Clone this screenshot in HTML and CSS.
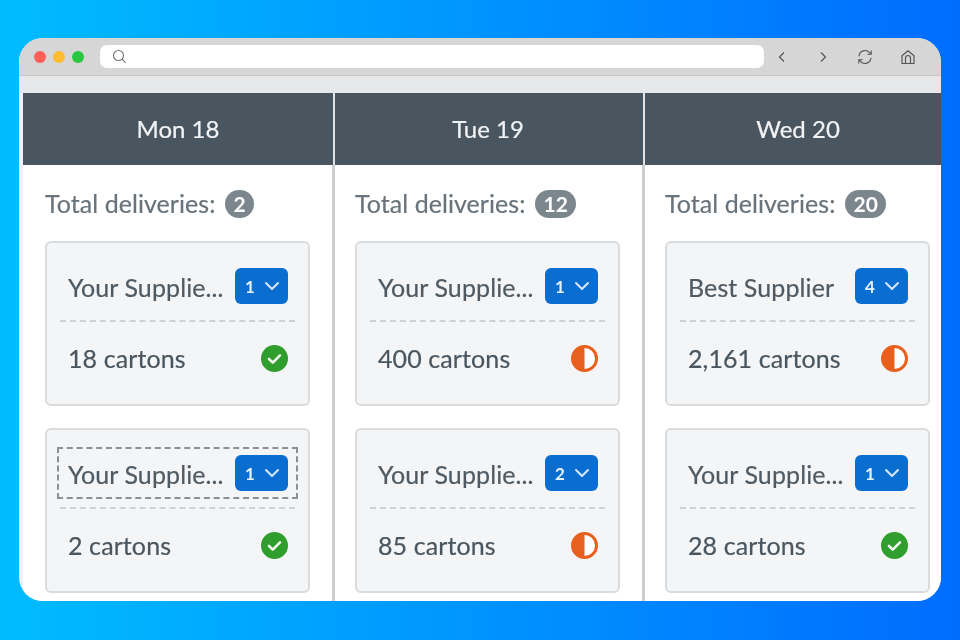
FILE: index.html
```html
<!DOCTYPE html>
<html lang="en">
<head>
<meta charset="utf-8">
<title>Deliveries</title>
<link rel="stylesheet" href="styles.css">
</head>
<body>
<svg class="defs" width="0" height="0" aria-hidden="true">
  <symbol id="done" viewBox="0 0 27 27"><circle cx="13.5" cy="13.5" r="13.5" fill="#2f9e2c"/><path d="M8 14l3.8 3.6L19 10.4" fill="none" stroke="#f2f7f0" stroke-width="2.6" stroke-linecap="round" stroke-linejoin="round"/></symbol>
  <symbol id="half" viewBox="0 0 27 27"><circle cx="13.5" cy="13.5" r="12" fill="#fff" stroke="#e8601e" stroke-width="3"/><path d="M13.5 2a11.5 11.5 0 0 0 0 23z" fill="#e8601e"/></symbol>
  <symbol id="chev" viewBox="0 0 16 10"><path d="M2 2l6 6 6-6" fill="none" stroke="#d5e6f8" stroke-width="2" stroke-linecap="round" stroke-linejoin="round"/></symbol>
</svg>
<main class="window">
  <header class="chrome">
    <div class="lights"><span class="light red"></span><span class="light yellow"></span><span class="light green"></span></div>
    <div class="address">
      <svg class="search" width="15" height="15" viewBox="0 0 15 15"><circle cx="6.5" cy="6.5" r="5" fill="none" stroke="#6f6f6f" stroke-width="1.1"/><path d="M10.2 10.2l3.4 3.4" stroke="#6f6f6f" stroke-width="1.1"/></svg>
    </div>
    <nav class="tools">
      <svg class="tool" width="14" height="14" viewBox="0 0 14 14"><path d="M9 2.5L4.5 7 9 11.5" fill="none" stroke="#555" stroke-width="1.2"/></svg>
      <svg class="tool" width="14" height="14" viewBox="0 0 14 14"><path d="M5 2.5L9.5 7 5 11.5" fill="none" stroke="#555" stroke-width="1.2"/></svg>
      <svg class="tool" width="16" height="16" viewBox="0 0 16 16"><path d="M2 7.2A6 6 0 0 1 12.5 3.6L14 5M14 8.8A6 6 0 0 1 3.5 12.4L2 11" fill="none" stroke="#555" stroke-width="1.1"/><path d="M14.2 1.4V5.2H10.4M1.8 14.6V10.8H5.6" fill="none" stroke="#555" stroke-width="1.1"/></svg>
      <svg class="tool" width="16" height="16" viewBox="0 0 16 16"><path d="M2 14.5V6.8L8 1.8l6 5v7.7zM5.5 14.5V9a2.5 2.5 0 0 1 5 0v5.5" fill="none" stroke="#555" stroke-width="1.2" stroke-linejoin="round"/></svg>
    </nav>
  </header>
  <div class="strip"></div>
  <section class="board">
    <article class="day">
      <h2 class="day-title">Mon 18</h2>
      <div class="day-body">
        <p class="total">Total deliveries: <span class="count">2</span></p>
        <div class="card">
          <div class="head"><span class="name">Your Supplie...</span><button class="pick">1<svg class="chev"><use href="#chev"/></svg></button></div>
          <div class="rule"></div>
          <div class="foot"><span>18 cartons</span><svg class="state"><use href="#done"/></svg></div>
        </div>
        <div class="card">
          <div class="head focused"><span class="name">Your Supplie...</span><button class="pick">1<svg class="chev"><use href="#chev"/></svg></button></div>
          <div class="rule"></div>
          <div class="foot"><span>2 cartons</span><svg class="state"><use href="#done"/></svg></div>
        </div>
      </div>
    </article>
    <article class="day">
      <h2 class="day-title">Tue 19</h2>
      <div class="day-body">
        <p class="total">Total deliveries: <span class="count">12</span></p>
        <div class="card">
          <div class="head"><span class="name">Your Supplie...</span><button class="pick">1<svg class="chev"><use href="#chev"/></svg></button></div>
          <div class="rule"></div>
          <div class="foot"><span>400 cartons</span><svg class="state"><use href="#half"/></svg></div>
        </div>
        <div class="card">
          <div class="head"><span class="name">Your Supplie...</span><button class="pick">2<svg class="chev"><use href="#chev"/></svg></button></div>
          <div class="rule"></div>
          <div class="foot"><span>85 cartons</span><svg class="state"><use href="#half"/></svg></div>
        </div>
      </div>
    </article>
    <article class="day">
      <h2 class="day-title">Wed 20</h2>
      <div class="day-body">
        <p class="total">Total deliveries: <span class="count">20</span></p>
        <div class="card">
          <div class="head"><span class="name">Best Supplier</span><button class="pick">4<svg class="chev"><use href="#chev"/></svg></button></div>
          <div class="rule"></div>
          <div class="foot"><span>2,161 cartons</span><svg class="state"><use href="#half"/></svg></div>
        </div>
        <div class="card">
          <div class="head"><span class="name">Your Supplie...</span><button class="pick">1<svg class="chev"><use href="#chev"/></svg></button></div>
          <div class="rule"></div>
          <div class="foot"><span>28 cartons</span><svg class="state"><use href="#done"/></svg></div>
        </div>
      </div>
    </article>
  </section>
</main>
</body>
</html>
```
FILE: styles.css
```css
* { box-sizing: border-box; }
html, body { margin: 0; height: 100%; }
body {
  width: 960px;
  height: 640px;
  padding: 38px 19px 39px;
  overflow: hidden;
  background: linear-gradient(90deg, #00bcff 0%, #006cff 100%);
  font-family: "Lato", "Noto Sans", sans-serif;
  -webkit-text-stroke: 0.2px currentColor;
}
.defs { position: absolute; }
.window {
  display: flex;
  flex-direction: column;
  width: 922px;
  height: 563px;
  border-radius: 24px;
  overflow: hidden;
  background: #eef2f4;
  filter: blur(0.35px);
}
.chrome {
  display: flex;
  align-items: center;
  flex: none;
  height: 38px;
  padding-left: 15px;
  background: #d6d6d6;
  border-bottom: 1px solid #c8c9ca;
}
.lights { display: flex; gap: 7px; width: 66px; }
.light { width: 12px; height: 12px; border-radius: 50%; }
.red { background: #ff5f57; }
.yellow { background: #febc2e; }
.green { background: #28c840; }
.address {
  display: flex;
  align-items: center;
  width: 664px;
  height: 23px;
  padding-left: 12px;
  background: #fff;
  border-radius: 7px;
}
.tools { display: flex; align-items: center; justify-content: space-between; width: 141px; margin-left: 11px; }
.tool { display: block; }
.strip { flex: none; height: 17px; background: #e6e7e9; }
.board { display: flex; flex: 1; min-height: 0; padding-left: 4px; overflow: hidden; }
.day { flex: none; width: 310px; background: #fff; }
.day:first-child { width: 312px; }
.day:first-child .day-title { padding-left: 2px; }
.day:first-child .day-body { padding-left: 22px; }
.day-title {
  display: flex;
  align-items: center;
  justify-content: center;
  height: 72px;
  margin: 0;
  padding: 0 2px 2px 0;
  background: #4a565f;
  border-right: 2px solid #dfe3e6;
  color: #f1f3f5;
  font-size: 24px;
  font-weight: 400;
}
.day-body { height: 436px; padding: 24px 0 0 20px; border-right: 3px solid #cbcdce; }
.total {
  display: flex;
  align-items: center;
  gap: 10px;
  height: 28px;
  margin: 0 0 24px;
  color: #68737b;
  font-size: 25px;
  letter-spacing: 0.05px;
}
.count {
  min-width: 28px;
  height: 28px;
  margin-top: 1px;
  padding: 0 8px;
  border-radius: 14px;
  background: #7c868d;
  color: #fff;
  font-size: 21px;
  font-weight: 700;
  line-height: 28px;
  text-align: center;
  -webkit-text-stroke: 0;
}
.card {
  width: 265px;
  height: 165px;
  margin-bottom: 22px;
  padding: 17px 10px;
  background: #f3f5f7;
  border: 2px solid #d9dbdd;
  border-radius: 6px;
}
.head {
  display: flex;
  align-items: center;
  justify-content: space-between;
  height: 52px;
  padding: 0 8px 0 9px;
  border: 2px dashed transparent;
}
.focused { border-color: #8a9096; }
.name { margin-top: 2px; color: #4f5a62; font-size: 25px; letter-spacing: 0.1px; white-space: nowrap; }
.pick {
  display: flex;
  align-items: center;
  gap: 9px;
  width: 53px;
  height: 36px;
  padding: 0 0 0 10px;
  border: 0;
  border-radius: 6px;
  background: #0a6ed1;
  color: #e8f2fb;
  font: 700 17px "Lato", sans-serif;
  -webkit-text-stroke: 0;
}
.chev { width: 16px; height: 10px; }
.rule { height: 2px; margin: 8px 3px 0; border-top: 2px dashed #cfd2d4; }
.foot {
  display: flex;
  align-items: center;
  justify-content: space-between;
  height: 64px;
  padding: 8px 10px 0 11px;
  color: #4a565f;
  font-size: 25px;
  letter-spacing: 0.1px;
}
.state { width: 27px; height: 27px; margin-top: 1px; }
```
